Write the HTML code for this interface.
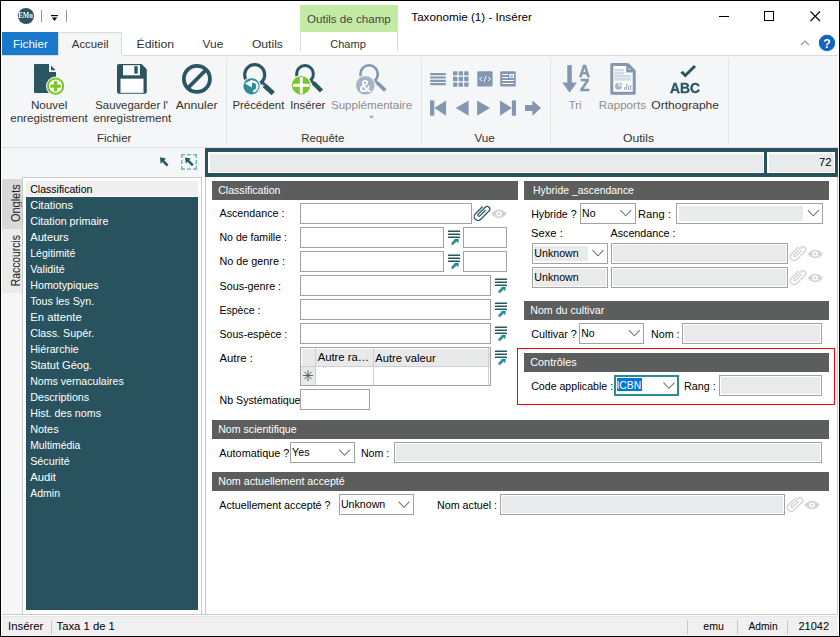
<!DOCTYPE html>
<html><head><meta charset="utf-8"><title>Taxonomie</title>
<style>
html,body{margin:0;padding:0;width:840px;height:637px;overflow:hidden;background:#fff;}
svg{display:block;font-family:"Liberation Sans",sans-serif;}
</style></head><body>
<svg width="840" height="637" viewBox="0 0 840 637">
<defs><filter id="gs" x="-20%" y="-20%" width="140%" height="140%"><feColorMatrix type="identity"/></filter></defs>
<rect x="0" y="0" width="840" height="637" fill="#ffffff" />
<rect x="300" y="5" width="98" height="27" fill="#c4eba6" />
<text x="307.0" y="22.5" font-size="11" fill="#454545" textLength="83.8" lengthAdjust="spacingAndGlyphs" >Outils de champ</text>
<text x="411.3" y="20.6" font-size="11" fill="#000" textLength="120.6" lengthAdjust="spacingAndGlyphs" >Taxonomie (1) - Insérer</text>
<circle cx="26" cy="16" r="8" fill="#2a5662"/>
<text x="18.6" y="18.3" font-size="7.6" font-weight="bold" fill="#fff" font-family="Liberation Serif" textLength="14.2" lengthAdjust="spacingAndGlyphs" filter="url(#gs)">EMu</text>
<rect x="41" y="10" width="1" height="12" fill="#9a9a9a" />
<rect x="66" y="10" width="1" height="12" fill="#9a9a9a" />
<rect x="51" y="15" width="7" height="1.2" fill="#000" />
<path d="M51.8 17.6 L57.2 17.6 L54.5 21 Z" fill="#000" />
<rect x="719" y="16" width="10" height="1" fill="#000" />
<rect x="764" y="11" width="10" height="1" fill="#000" />
<rect x="764" y="20" width="10" height="1" fill="#000" />
<rect x="764" y="11" width="1" height="10" fill="#000" />
<rect x="773" y="11" width="1" height="10" fill="#000" />
<path d="M810.5 11.5 L820 21 M820 11.5 L810.5 21" fill="none" stroke="#000" stroke-width="1.1" />
<path d="M801 45 L805 41 L809 45" fill="none" stroke="#9a9a9a" stroke-width="1.2" />
<circle cx="827" cy="43" r="8.2" fill="#1565c0"/>
<text x="827" y="47.5" font-size="12.5" font-weight="bold" fill="#fff" text-anchor="middle" filter="url(#gs)">?</text>
<rect x="2" y="32" width="56" height="23" fill="#1979ca" />
<text x="12.9" y="47.6" font-size="11" fill="#fff" textLength="34.9" lengthAdjust="spacingAndGlyphs" >Fichier</text>
<rect x="2" y="55" width="836" height="1" fill="#dadbdc" />
<rect x="58" y="32" width="64" height="24" fill="#f5f6f7" />
<rect x="58" y="32" width="1" height="23" fill="#dadbdc" />
<rect x="58" y="32" width="64" height="1" fill="#dadbdc" />
<rect x="121" y="32" width="1" height="23" fill="#dadbdc" />
<text x="71.8" y="47.7" font-size="11" fill="#333333" textLength="36.7" lengthAdjust="spacingAndGlyphs" >Accueil</text>
<text x="136.6" y="47.7" font-size="11" fill="#333333" textLength="37.5" lengthAdjust="spacingAndGlyphs" >Édition</text>
<text x="202.6" y="47.7" font-size="11" fill="#333333" textLength="20.8" lengthAdjust="spacingAndGlyphs" >Vue</text>
<text x="251.9" y="47.7" font-size="11" fill="#333333" textLength="31.0" lengthAdjust="spacingAndGlyphs" >Outils</text>
<rect x="300" y="32" width="1" height="19" fill="#d9d9d9" />
<rect x="397" y="32" width="1" height="19" fill="#d9d9d9" />
<text x="330.3" y="47.7" font-size="11" fill="#333333" textLength="35.5" lengthAdjust="spacingAndGlyphs" >Champ</text>
<rect x="2" y="56" width="836" height="91" fill="#f5f6f7" />
<rect x="59" y="55" width="62" height="1" fill="#f5f6f7" />
<rect x="2" y="147" width="836" height="1" fill="#dcdddf" />
<rect x="226" y="58" width="1" height="86" fill="#e1e3e6" />
<rect x="421" y="58" width="1" height="86" fill="#e1e3e6" />
<rect x="550" y="58" width="1" height="86" fill="#e1e3e6" />
<rect x="728" y="58" width="1" height="86" fill="#e1e3e6" />
<path d="M35 64 H49 V72 H56 V92 Q56 93 55 93 H35 Q34 93 34 92 V65 Q34 64 35 64 Z" fill="#2a5662" />
<path d="M51 65.5 L55.6 70.2 L51 70.2 Z" fill="#2a5662" />
<circle cx="55.6" cy="86.2" r="9.6" fill="#f5f6f7"/>
<circle cx="55.6" cy="86.2" r="7.6" fill="#fff" stroke="#7ac52a" stroke-width="2"/>
<rect x="50.3" y="84.6" width="10.6" height="3.2" fill="#7ac52a" rx="0.8"/>
<rect x="54" y="80.9" width="3.2" height="10.6" fill="#7ac52a" rx="0.8"/>
<text x="30.9" y="108.9" font-size="11" fill="#333333" textLength="36.4" lengthAdjust="spacingAndGlyphs" >Nouvel</text>
<text x="10.2" y="121.5" font-size="11" fill="#333333" textLength="77.5" lengthAdjust="spacingAndGlyphs" >enregistrement</text>
<path d="M119 64 H141.5 L146.8 69.3 V91.8 Q146.8 93.8 144.8 93.8 H119 Q117 93.8 117 91.8 V66 Q117 64 119 64 Z" fill="#2a5662" />
<rect x="123" y="65.2" width="17" height="10.1" fill="#fff" />
<rect x="134.3" y="66.2" width="3.4" height="7.5" fill="#2a5662" />
<rect x="120.5" y="78.7" width="23" height="14.1" fill="#fff" />
<text x="95.3" y="109" font-size="11" fill="#333333" textLength="72.7" lengthAdjust="spacingAndGlyphs" >Sauvegarder l&#x27;</text>
<text x="93.2" y="121.7" font-size="11" fill="#333333" textLength="78.1" lengthAdjust="spacingAndGlyphs" >enregistrement</text>
<circle cx="196.9" cy="78.9" r="13" fill="none" stroke="#2a5662" stroke-width="3.8"/>
<path d="M187.5 88.3 L206.3 69.5" fill="none" stroke="#2a5662" stroke-width="3.8" />
<text x="175.8" y="109" font-size="11" fill="#333333" textLength="41.7" lengthAdjust="spacingAndGlyphs" >Annuler</text>
<text x="97.0" y="141.7" font-size="11" fill="#333333" textLength="34.3" lengthAdjust="spacingAndGlyphs" >Fichier</text>
<circle cx="254.7" cy="74.7" r="10.05" fill="none" stroke="#2a5662" stroke-width="3.1"/>
<path d="M261 81 L265 85" fill="none" stroke="#2a5662" stroke-width="3" />
<path d="M264.5 85.5 L273.2 93.5" fill="none" stroke="#2a5662" stroke-width="5" />
<circle cx="251.5" cy="86.3" r="9.3" fill="#f5f6f7"/>
<circle cx="251.5" cy="86.3" r="8.1" fill="#2b8e95"/>
<path d="M244.8 83.6 L252.3 79.4 L251.8 87.6 Z" fill="#fff" />
<path d="M251.8 81.6 A4.9 4.9 0 0 1 253.2 91.3" fill="none" stroke="#fff" stroke-width="2.3" />
<text x="232.5" y="108.6" font-size="11" fill="#333333" textLength="51.8" lengthAdjust="spacingAndGlyphs" >Précédent</text>
<circle cx="305" cy="73.9" r="8.4" fill="none" stroke="#2a5662" stroke-width="3"/>
<path d="M310.5 80 L314 83.5" fill="none" stroke="#2a5662" stroke-width="3" />
<path d="M313.5 83 L321.5 91" fill="none" stroke="#2a5662" stroke-width="4.4" />
<circle cx="301.1" cy="85.3" r="10.4" fill="#f5f6f7"/>
<circle cx="301.1" cy="85.3" r="9.2" fill="#7ac52a"/>
<rect x="293" y="83.8" width="16.6" height="3" fill="#fff" />
<rect x="299.8" y="77" width="3" height="16.6" fill="#fff" />
<text x="290.2" y="108.6" font-size="11" fill="#333333" textLength="35.1" lengthAdjust="spacingAndGlyphs" >Insérer</text>
<circle cx="369.1" cy="74" r="8.7" fill="none" stroke="#8497b0" stroke-width="2.6"/>
<path d="M374.5 80 L378 83.5" fill="none" stroke="#8497b0" stroke-width="2.6" />
<path d="M377.5 83 L385.3 90.5" fill="none" stroke="#8497b0" stroke-width="3.8" />
<circle cx="365.3" cy="85.3" r="10.4" fill="#f5f6f7"/>
<circle cx="365.3" cy="85.3" r="9.3" fill="#a6b4c9"/>
<text x="365.3" y="91.6" font-size="16.5" font-weight="bold" fill="#fff" text-anchor="middle" filter="url(#gs)">&amp;</text>
<text x="330.9" y="108.6" font-size="11" fill="#8e8e8e" textLength="81.3" lengthAdjust="spacingAndGlyphs" >Supplémentaire</text>
<path d="M369 115.7 L374 115.7 L371.5 118.7 Z" fill="#a9a9a9" />
<text x="301.2" y="141.7" font-size="11" fill="#333333" textLength="43.1" lengthAdjust="spacingAndGlyphs" >Requête</text>
<rect x="430" y="73" width="16" height="2.2" fill="#8497b0" rx="1"/>
<rect x="430" y="76.4" width="16" height="2.2" fill="#8497b0" rx="1"/>
<rect x="430" y="79.8" width="16" height="2.2" fill="#8497b0" rx="1"/>
<rect x="430" y="83" width="16" height="2.2" fill="#8497b0" rx="1"/>
<rect x="453.0" y="71.2" width="4.4" height="4.4" fill="#8497b0" rx="0.8"/>
<rect x="453.0" y="76.8" width="4.4" height="4.4" fill="#8497b0" rx="0.8"/>
<rect x="453.0" y="82.4" width="4.4" height="4.4" fill="#8497b0" rx="0.8"/>
<rect x="458.6" y="71.2" width="4.4" height="4.4" fill="#8497b0" rx="0.8"/>
<rect x="458.6" y="76.8" width="4.4" height="4.4" fill="#8497b0" rx="0.8"/>
<rect x="458.6" y="82.4" width="4.4" height="4.4" fill="#8497b0" rx="0.8"/>
<rect x="464.2" y="71.2" width="4.4" height="4.4" fill="#8497b0" rx="0.8"/>
<rect x="464.2" y="76.8" width="4.4" height="4.4" fill="#8497b0" rx="0.8"/>
<rect x="464.2" y="82.4" width="4.4" height="4.4" fill="#8497b0" rx="0.8"/>
<rect x="477.3" y="71.2" width="15.3" height="15.3" fill="#8497b0" rx="1"/>
<path d="M482 77 L479.5 79 L482 81 M488 77 L490.5 79 L488 81 M486 76 L484 82" fill="none" stroke="#eef1f6" stroke-width="1" />
<rect x="500.2" y="71.2" width="15.5" height="15.3" fill="#8497b0" rx="1"/>
<rect x="502.2" y="74" width="6" height="1" fill="#fff" />
<rect x="502.2" y="77" width="6" height="1" fill="#fff" />
<rect x="509.4" y="74" width="4.6" height="4" fill="#fff" />
<rect x="510.4" y="75.6" width="2.6" height="1.6" fill="#8497b0" />
<rect x="502.2" y="80" width="11.5" height="1" fill="#fff" />
<rect x="502.2" y="83" width="11.5" height="1" fill="#fff" />
<rect x="430" y="100.4" width="4.3" height="15.3" fill="#8497b0" />
<path d="M446.1 100.4 L446.1 115.7 L434.3 108 Z" fill="#8497b0" />
<path d="M468.6 100.4 L468.6 115.7 L455.7 108 Z" fill="#8497b0" />
<path d="M477.1 100.4 L477.1 115.7 L490 108 Z" fill="#8497b0" />
<path d="M500 100.4 L500 115.7 L511.9 108 Z" fill="#8497b0" />
<rect x="511.9" y="100.4" width="4.1" height="15.3" fill="#8497b0" />
<rect x="525" y="105" width="8" height="6" fill="#8497b0" />
<path d="M532.4 100.4 L541 108 L532.4 115.7 Z" fill="#8497b0" />
<text x="474.5" y="141.7" font-size="11" fill="#333333" textLength="20.3" lengthAdjust="spacingAndGlyphs" >Vue</text>
<rect x="567.3" y="65.1" width="4.5" height="18" fill="#8497b0" />
<path d="M562.3 82.6 L576.9 82.6 L569.6 92.8 Z" fill="#8497b0" />
<text x="584.5" y="76.7" font-size="16" font-weight="bold" fill="#8497b0" text-anchor="middle" textLength="11" lengthAdjust="spacingAndGlyphs" stroke="#8497b0" stroke-width="0.5" filter="url(#gs)">A</text>
<text x="584.8" y="91" font-size="16" font-weight="bold" fill="#8497b0" text-anchor="middle" textLength="9.5" lengthAdjust="spacingAndGlyphs" stroke="#8497b0" stroke-width="0.5" filter="url(#gs)">Z</text>
<text x="568.7" y="108.8" font-size="11" fill="#8e8e8e" textLength="12.8" lengthAdjust="spacingAndGlyphs" >Tri</text>
<path d="M611.8 64.4 H627.5 L634.2 71.1 V93.2 H611.8 Z" fill="#ffffff" stroke="#8497b0" stroke-width="3" stroke-linejoin="round"/>
<path d="M627.5 64.4 V71.1 H634.2" fill="none" stroke="#8497b0" stroke-width="2.6" />
<rect x="614.3" y="68.8" width="10" height="2.6" fill="#d3dbe6" />
<rect x="614.3" y="71.9" width="10" height="2.6" fill="#d3dbe6" />
<rect x="614.3" y="75" width="17" height="2.6" fill="#d3dbe6" />
<rect x="614.3" y="78.1" width="17" height="2.6" fill="#d3dbe6" />
<path d="M618.5 82.8 A3.5 3.5 0 1 0 622 86.3 L618.5 86.3 Z" fill="#a9b6c9" />
<path d="M619.3 82 A3.5 3.5 0 0 1 622.8 85.5 L619.3 85.5 Z" fill="#c5cfdc" />
<rect x="624" y="87" width="1.3" height="3" fill="#a9b6c9" />
<rect x="626" y="84" width="1.3" height="6" fill="#a9b6c9" />
<rect x="628" y="86" width="1.3" height="4" fill="#a9b6c9" />
<rect x="630" y="85" width="1.3" height="5" fill="#a9b6c9" />
<text x="598.8" y="108.8" font-size="11" fill="#8e8e8e" textLength="47.2" lengthAdjust="spacingAndGlyphs" >Rapports</text>
<path d="M681.5 71.8 L685.3 75.5 L695 66" fill="none" stroke="#2a5662" stroke-width="3" />
<text x="670" y="92.5" font-size="14.5" font-weight="bold" fill="#2a5662" textLength="30" lengthAdjust="spacingAndGlyphs" stroke="#2a5662" stroke-width="0.35" filter="url(#gs)">ABC</text>
<text x="651.3" y="108.8" font-size="11" fill="#333333" textLength="67.7" lengthAdjust="spacingAndGlyphs" >Orthographe</text>
<text x="623.0" y="141.7" font-size="11" fill="#333333" textLength="31.1" lengthAdjust="spacingAndGlyphs" >Outils</text>
<rect x="2" y="148" width="203" height="466" fill="#f5f6f7" />
<path d="M160 157.2 L166 158.4 L164.2 160.2 L168.5 164.5 L166.6 166.4 L162.3 162.1 L160.6 163.8 Z" fill="#2a5662" />
<rect x="181" y="154" width="4" height="1.5" fill="#6fbcc0" />
<rect x="187" y="154" width="4" height="1.5" fill="#6fbcc0" />
<rect x="193" y="154" width="4" height="1.5" fill="#6fbcc0" />
<rect x="181" y="168.3" width="4" height="1.5" fill="#6fbcc0" />
<rect x="187" y="168.3" width="4" height="1.5" fill="#6fbcc0" />
<rect x="193" y="168.3" width="4" height="1.5" fill="#6fbcc0" />
<rect x="181" y="154" width="1.5" height="4" fill="#6fbcc0" />
<rect x="181" y="160" width="1.5" height="4" fill="#6fbcc0" />
<rect x="181" y="166" width="1.5" height="4" fill="#6fbcc0" />
<rect x="195.5" y="154" width="1.5" height="4" fill="#6fbcc0" />
<rect x="195.5" y="160" width="1.5" height="4" fill="#6fbcc0" />
<rect x="195.5" y="166" width="1.5" height="4" fill="#6fbcc0" />
<path d="M185 157.5 L190.9 158.4 L189.2 160.1 L193.7 164.6 L192 166.3 L187.5 161.8 L185.8 163.5 Z" fill="#2a5662" />
<rect x="2" y="179" width="20" height="50" fill="#d9d9d9" />
<rect x="2" y="229" width="20" height="64" fill="#ebebeb" />
<text transform="translate(19.5,222) rotate(-90)" font-size="12" fill="#222" textLength="37.7" lengthAdjust="spacingAndGlyphs">Onglets</text>
<text transform="translate(19.5,286.3) rotate(-90)" font-size="12" fill="#222" textLength="51.3" lengthAdjust="spacingAndGlyphs">Raccourcis</text>
<rect x="22" y="177" width="180" height="438" fill="#ffffff" />
<rect x="22" y="177" width="180" height="1" fill="#c9c9c9" />
<rect x="22" y="614" width="180" height="1" fill="#c9c9c9" />
<rect x="22" y="177" width="1" height="438" fill="#c9c9c9" />
<rect x="201" y="177" width="1" height="438" fill="#c9c9c9" />
<rect x="26" y="181" width="172" height="15" fill="#efefef" />
<rect x="26" y="197" width="172" height="413" fill="#28535e" />
<text x="30.2" y="193" font-size="11" fill="#000" textLength="62.2" lengthAdjust="spacingAndGlyphs" >Classification</text>
<text x="30.2" y="209" font-size="11" fill="#ffffff" textLength="42.8" lengthAdjust="spacingAndGlyphs" >Citations</text>
<text x="30.2" y="225" font-size="11" fill="#ffffff" textLength="78.2" lengthAdjust="spacingAndGlyphs" >Citation primaire</text>
<text x="30.2" y="241" font-size="11" fill="#ffffff" textLength="38.5" lengthAdjust="spacingAndGlyphs" >Auteurs</text>
<text x="30.2" y="257" font-size="11" fill="#ffffff" textLength="45.2" lengthAdjust="spacingAndGlyphs" >Légitimité</text>
<text x="30.2" y="273" font-size="11" fill="#ffffff" textLength="34.5" lengthAdjust="spacingAndGlyphs" >Validité</text>
<text x="30.2" y="289" font-size="11" fill="#ffffff" textLength="68.5" lengthAdjust="spacingAndGlyphs" >Homotypiques</text>
<text x="30.2" y="305" font-size="11" fill="#ffffff" textLength="64.0" lengthAdjust="spacingAndGlyphs" >Tous les Syn.</text>
<text x="30.2" y="321" font-size="11" fill="#ffffff" textLength="51.5" lengthAdjust="spacingAndGlyphs" >En attente</text>
<text x="30.2" y="337" font-size="11" fill="#ffffff" textLength="64.0" lengthAdjust="spacingAndGlyphs" >Class. Supér.</text>
<text x="30.2" y="353" font-size="11" fill="#ffffff" textLength="48.5" lengthAdjust="spacingAndGlyphs" >Hiérarchie</text>
<text x="30.2" y="369" font-size="11" fill="#ffffff" textLength="62.0" lengthAdjust="spacingAndGlyphs" >Statut Géog.</text>
<text x="30.2" y="385" font-size="11" fill="#ffffff" textLength="93.5" lengthAdjust="spacingAndGlyphs" >Noms vernaculaires</text>
<text x="30.2" y="401" font-size="11" fill="#ffffff" textLength="59.0" lengthAdjust="spacingAndGlyphs" >Descriptions</text>
<text x="30.2" y="417" font-size="11" fill="#ffffff" textLength="70.8" lengthAdjust="spacingAndGlyphs" >Hist. des noms</text>
<text x="30.2" y="433" font-size="11" fill="#ffffff" textLength="28.4" lengthAdjust="spacingAndGlyphs" >Notes</text>
<text x="30.2" y="449" font-size="11" fill="#ffffff" textLength="50.2" lengthAdjust="spacingAndGlyphs" >Multimédia</text>
<text x="30.2" y="465" font-size="11" fill="#ffffff" textLength="39.5" lengthAdjust="spacingAndGlyphs" >Sécurité</text>
<text x="30.2" y="481" font-size="11" fill="#ffffff" textLength="25.8" lengthAdjust="spacingAndGlyphs" >Audit</text>
<text x="30.2" y="497" font-size="11" fill="#ffffff" textLength="29.8" lengthAdjust="spacingAndGlyphs" >Admin</text>
<rect x="205" y="148" width="633" height="29" fill="#28535e" />
<rect x="208" y="152" width="556" height="21" fill="#ffffff" />
<rect x="210" y="154" width="553" height="18" fill="#e9eaeb" />
<rect x="767" y="152" width="68" height="21" fill="#ffffff" />
<rect x="769" y="154" width="65" height="18" fill="#e9eaeb" />
<rect x="202" y="177" width="3" height="437" fill="#ffffff" />
<text x="819.0" y="165.6" font-size="11" fill="#000" textLength="12.5" lengthAdjust="spacingAndGlyphs" >72</text>
<rect x="205" y="177" width="1" height="438" fill="#c9c9c9" />
<rect x="837" y="177" width="1" height="438" fill="#c9c9c9" />
<rect x="2" y="614" width="836" height="1" fill="#c9c9c9" />
<rect x="212" y="181" width="306" height="19" fill="#5c5e5d" />
<text x="218.2" y="193.6" font-size="11" fill="#fff" textLength="62.3" lengthAdjust="spacingAndGlyphs" >Classification</text>
<rect x="524" y="181" width="305" height="19" fill="#5c5e5d" />
<text x="533.1" y="193.6" font-size="11" fill="#fff" textLength="100.8" lengthAdjust="spacingAndGlyphs" >Hybride _ascendance</text>
<rect x="524" y="301" width="305" height="19" fill="#5c5e5d" />
<text x="530.2" y="313.6" font-size="11" fill="#fff" textLength="74.1" lengthAdjust="spacingAndGlyphs" >Nom du cultivar</text>
<rect x="524" y="353" width="305" height="19" fill="#5c5e5d" />
<text x="530.2" y="365.6" font-size="11" fill="#fff" textLength="46.6" lengthAdjust="spacingAndGlyphs" >Contrôles</text>
<rect x="212" y="420" width="617" height="19" fill="#5c5e5d" />
<text x="218.2" y="432.6" font-size="11" fill="#fff" textLength="78.5" lengthAdjust="spacingAndGlyphs" >Nom scientifique</text>
<rect x="212" y="472" width="617" height="19" fill="#5c5e5d" />
<text x="218.2" y="484.6" font-size="11" fill="#fff" textLength="126.6" lengthAdjust="spacingAndGlyphs" >Nom actuellement accepté</text>
<rect x="517" y="348" width="318" height="1" fill="#ff0000" />
<rect x="517" y="404" width="318" height="1" fill="#ff0000" />
<rect x="517" y="348" width="1" height="57" fill="#ff0000" />
<rect x="834" y="348" width="1" height="57" fill="#ff0000" />
<text x="219.5" y="216.7" font-size="11" fill="#000" textLength="64.9" lengthAdjust="spacingAndGlyphs" >Ascendance :</text>
<rect x="300" y="203" width="172" height="21" fill="#fff" />
<rect x="300" y="203" width="172" height="1" fill="#a2a2a2" />
<rect x="300" y="223" width="172" height="1" fill="#a2a2a2" />
<rect x="300" y="203" width="1" height="21" fill="#a2a2a2" />
<rect x="471" y="203" width="1" height="21" fill="#a2a2a2" />
<path transform="translate(482,213.8) rotate(-45)" d="M5.7 -4.7 L-4.65 -4.7 A3.85 3.85 0 0 0 -4.65 3.0 L6.9 3.0 A2.7 2.7 0 0 0 6.9 -2.4 L-3.0 -2.4 A1.2 1.2 0 0 0 -3.0 0 L5.3 0" fill="none" stroke="#2a5662" stroke-width="1.25"/>
<path d="M491.2 213.8 Q499 205.3 506.8 213.8 Q499 222.3 491.2 213.8 Z" fill="#d2d2d2" />
<circle cx="499" cy="213.8" r="2.8" fill="#fff"/>
<circle cx="499" cy="213.8" r="1.3" fill="#d2d2d2"/>
<text x="219.5" y="240.7" font-size="11" fill="#000" textLength="67.4" lengthAdjust="spacingAndGlyphs" >No de famille :</text>
<rect x="300" y="227" width="144" height="21" fill="#fff" />
<rect x="300" y="227" width="144" height="1" fill="#a2a2a2" />
<rect x="300" y="247" width="144" height="1" fill="#a2a2a2" />
<rect x="300" y="227" width="1" height="21" fill="#a2a2a2" />
<rect x="443" y="227" width="1" height="21" fill="#a2a2a2" />
<rect x="448" y="230.5" width="12" height="1.5" fill="#2a5662" />
<rect x="448" y="233.5" width="12" height="1.5" fill="#2a5662" />
<rect x="448" y="236.5" width="12" height="1.5" fill="#2a5662" />
<path d="M452.6 243.5 L456 240.3" fill="none" stroke="#2b8e95" stroke-width="2.7" stroke-linecap="round"/>
<path d="M454 239.1 L458.8 238.8 L458.4 243.3 Z" fill="#2b8e95" />
<rect x="463" y="227" width="44" height="21" fill="#fff" />
<rect x="463" y="227" width="44" height="1" fill="#a2a2a2" />
<rect x="463" y="247" width="44" height="1" fill="#a2a2a2" />
<rect x="463" y="227" width="1" height="21" fill="#a2a2a2" />
<rect x="506" y="227" width="1" height="21" fill="#a2a2a2" />
<text x="219.5" y="264.7" font-size="11" fill="#000" textLength="65.4" lengthAdjust="spacingAndGlyphs" >No de genre :</text>
<rect x="300" y="251" width="144" height="21" fill="#fff" />
<rect x="300" y="251" width="144" height="1" fill="#a2a2a2" />
<rect x="300" y="271" width="144" height="1" fill="#a2a2a2" />
<rect x="300" y="251" width="1" height="21" fill="#a2a2a2" />
<rect x="443" y="251" width="1" height="21" fill="#a2a2a2" />
<rect x="448" y="254.5" width="12" height="1.5" fill="#2a5662" />
<rect x="448" y="257.5" width="12" height="1.5" fill="#2a5662" />
<rect x="448" y="260.5" width="12" height="1.5" fill="#2a5662" />
<path d="M452.6 267.5 L456 264.3" fill="none" stroke="#2b8e95" stroke-width="2.7" stroke-linecap="round"/>
<path d="M454 263.1 L458.8 262.8 L458.4 267.3 Z" fill="#2b8e95" />
<rect x="463" y="251" width="44" height="21" fill="#fff" />
<rect x="463" y="251" width="44" height="1" fill="#a2a2a2" />
<rect x="463" y="271" width="44" height="1" fill="#a2a2a2" />
<rect x="463" y="251" width="1" height="21" fill="#a2a2a2" />
<rect x="506" y="251" width="1" height="21" fill="#a2a2a2" />
<text x="219.5" y="289.5" font-size="11" fill="#000" textLength="61.6" lengthAdjust="spacingAndGlyphs" >Sous-genre :</text>
<rect x="300" y="275" width="191" height="21" fill="#fff" />
<rect x="300" y="275" width="191" height="1" fill="#a2a2a2" />
<rect x="300" y="295" width="191" height="1" fill="#a2a2a2" />
<rect x="300" y="275" width="1" height="21" fill="#a2a2a2" />
<rect x="490" y="275" width="1" height="21" fill="#a2a2a2" />
<rect x="495" y="278.5" width="12" height="1.5" fill="#2a5662" />
<rect x="495" y="281.5" width="12" height="1.5" fill="#2a5662" />
<rect x="495" y="284.5" width="12" height="1.5" fill="#2a5662" />
<path d="M499.6 291.5 L503 288.3" fill="none" stroke="#2b8e95" stroke-width="2.7" stroke-linecap="round"/>
<path d="M501 287.1 L505.8 286.8 L505.4 291.3 Z" fill="#2b8e95" />
<text x="219.5" y="313.5" font-size="11" fill="#000" textLength="40.9" lengthAdjust="spacingAndGlyphs" >Espèce :</text>
<rect x="300" y="299" width="191" height="21" fill="#fff" />
<rect x="300" y="299" width="191" height="1" fill="#a2a2a2" />
<rect x="300" y="319" width="191" height="1" fill="#a2a2a2" />
<rect x="300" y="299" width="1" height="21" fill="#a2a2a2" />
<rect x="490" y="299" width="1" height="21" fill="#a2a2a2" />
<rect x="495" y="302.5" width="12" height="1.5" fill="#2a5662" />
<rect x="495" y="305.5" width="12" height="1.5" fill="#2a5662" />
<rect x="495" y="308.5" width="12" height="1.5" fill="#2a5662" />
<path d="M499.6 315.5 L503 312.3" fill="none" stroke="#2b8e95" stroke-width="2.7" stroke-linecap="round"/>
<path d="M501 311.1 L505.8 310.8 L505.4 315.3 Z" fill="#2b8e95" />
<text x="219.5" y="337.5" font-size="11" fill="#000" textLength="67.8" lengthAdjust="spacingAndGlyphs" >Sous-espèce :</text>
<rect x="300" y="323" width="191" height="21" fill="#fff" />
<rect x="300" y="323" width="191" height="1" fill="#a2a2a2" />
<rect x="300" y="343" width="191" height="1" fill="#a2a2a2" />
<rect x="300" y="323" width="1" height="21" fill="#a2a2a2" />
<rect x="490" y="323" width="1" height="21" fill="#a2a2a2" />
<rect x="495" y="326.5" width="12" height="1.5" fill="#2a5662" />
<rect x="495" y="329.5" width="12" height="1.5" fill="#2a5662" />
<rect x="495" y="332.5" width="12" height="1.5" fill="#2a5662" />
<path d="M499.6 339.5 L503 336.3" fill="none" stroke="#2b8e95" stroke-width="2.7" stroke-linecap="round"/>
<path d="M501 335.1 L505.8 334.8 L505.4 339.3 Z" fill="#2b8e95" />
<text x="219.5" y="362" font-size="11" fill="#000" textLength="33.4" lengthAdjust="spacingAndGlyphs" >Autre :</text>
<rect x="300" y="347" width="191" height="39" fill="#fff" />
<rect x="300" y="347" width="191" height="1" fill="#a2a2a2" />
<rect x="300" y="385" width="191" height="1" fill="#a2a2a2" />
<rect x="300" y="347" width="1" height="39" fill="#a2a2a2" />
<rect x="490" y="347" width="1" height="39" fill="#a2a2a2" />
<rect x="301" y="348" width="189" height="18" fill="#e8e9ea" />
<rect x="301" y="348" width="189" height="1" fill="#fff" />
<rect x="301" y="348" width="1" height="37" fill="#fff" />
<rect x="301" y="366" width="189" height="1" fill="#d0d0d0" />
<rect x="315" y="348" width="1" height="37" fill="#d0d0d0" />
<rect x="373" y="348" width="1" height="37" fill="#d0d0d0" />
<rect x="488" y="348" width="1" height="37" fill="#d0d0d0" />
<rect x="301" y="367" width="14" height="18" fill="#e8e9ea" />
<path d="M308 370 V381 M302.8 375.5 H313.2 M304.3 371.8 L311.7 379.2 M311.7 371.8 L304.3 379.2" fill="none" stroke="#555" stroke-width="0.9" />
<text x="317.7" y="361.2" font-size="11" fill="#000" textLength="51.4" lengthAdjust="spacingAndGlyphs" >Autre ra…</text>
<text x="375.2" y="361.8" font-size="11" fill="#000" textLength="60.5" lengthAdjust="spacingAndGlyphs" >Autre valeur</text>
<rect x="495" y="350.5" width="12" height="1.5" fill="#2a5662" />
<rect x="495" y="353.5" width="12" height="1.5" fill="#2a5662" />
<rect x="495" y="356.5" width="12" height="1.5" fill="#2a5662" />
<path d="M499.6 363.5 L503 360.3" fill="none" stroke="#2b8e95" stroke-width="2.7" stroke-linecap="round"/>
<path d="M501 359.1 L505.8 358.8 L505.4 363.3 Z" fill="#2b8e95" />
<text x="219.5" y="403.5" font-size="11" fill="#000" textLength="81.0" lengthAdjust="spacingAndGlyphs" >Nb Systématique</text>
<rect x="300" y="389" width="70" height="21" fill="#fff" />
<rect x="300" y="389" width="70" height="1" fill="#a2a2a2" />
<rect x="300" y="409" width="70" height="1" fill="#a2a2a2" />
<rect x="300" y="389" width="1" height="21" fill="#a2a2a2" />
<rect x="369" y="389" width="1" height="21" fill="#a2a2a2" />
<text x="531.2" y="217.6" font-size="11" fill="#000" textLength="45.4" lengthAdjust="spacingAndGlyphs" >Hybride ?</text>
<rect x="580" y="203" width="56" height="21" fill="#fff" />
<rect x="580" y="203" width="56" height="1" fill="#a2a2a2" />
<rect x="580" y="223" width="56" height="1" fill="#a2a2a2" />
<rect x="580" y="203" width="1" height="21" fill="#a2a2a2" />
<rect x="635" y="203" width="1" height="21" fill="#a2a2a2" />
<text x="582.1" y="217" font-size="11" fill="#000" textLength="13.4" lengthAdjust="spacingAndGlyphs" >No</text>
<path d="M620.3 210.2 L625.8 215.8 L631.3 210.2" fill="none" stroke="#707070" stroke-width="1.05" />
<text x="638.0" y="217.6" font-size="11" fill="#000" textLength="32.8" lengthAdjust="spacingAndGlyphs" >Rang :</text>
<rect x="676" y="203" width="147" height="21" fill="#fff" />
<rect x="676" y="203" width="147" height="1" fill="#a2a2a2" />
<rect x="676" y="223" width="147" height="1" fill="#a2a2a2" />
<rect x="676" y="203" width="1" height="21" fill="#a2a2a2" />
<rect x="822" y="203" width="1" height="21" fill="#a2a2a2" />
<rect x="679" y="206" width="124" height="15" fill="#e9eaeb" />
<path d="M807.8 210.2 L813.3 215.8 L818.8 210.2" fill="none" stroke="#707070" stroke-width="1.05" />
<text x="531.1" y="236.6" font-size="11" fill="#000" textLength="31.7" lengthAdjust="spacingAndGlyphs" >Sexe :</text>
<text x="610.5" y="236.6" font-size="11" fill="#000" textLength="65.0" lengthAdjust="spacingAndGlyphs" >Ascendance :</text>
<rect x="532" y="243" width="76" height="21" fill="#fff" />
<rect x="532" y="243" width="76" height="1" fill="#a2a2a2" />
<rect x="532" y="263" width="76" height="1" fill="#a2a2a2" />
<rect x="532" y="243" width="1" height="21" fill="#a2a2a2" />
<rect x="607" y="243" width="1" height="21" fill="#a2a2a2" />
<rect x="534" y="246" width="54" height="15" fill="#e9eaeb" />
<text x="534.3" y="256.7" font-size="11" fill="#000" textLength="44.4" lengthAdjust="spacingAndGlyphs" >Unknown</text>
<path d="M592.5 250.2 L598 255.8 L603.5 250.2" fill="none" stroke="#707070" stroke-width="1.05" />
<rect x="611" y="243" width="177" height="21" fill="#fff" />
<rect x="611" y="243" width="177" height="1" fill="#a2a2a2" />
<rect x="611" y="263" width="177" height="1" fill="#a2a2a2" />
<rect x="611" y="243" width="1" height="21" fill="#a2a2a2" />
<rect x="787" y="243" width="1" height="21" fill="#a2a2a2" />
<rect x="613" y="245" width="173" height="17" fill="#e9eaeb" />
<path transform="translate(798,254) rotate(-45)" d="M5.7 -4.7 L-4.65 -4.7 A3.85 3.85 0 0 0 -4.65 3.0 L6.9 3.0 A2.7 2.7 0 0 0 6.9 -2.4 L-3.0 -2.4 A1.2 1.2 0 0 0 -3.0 0 L5.3 0" fill="none" stroke="#d0d0d0" stroke-width="1.25"/>
<path d="M807.4000000000001 254 Q815.2 245.5 823.0 254 Q815.2 262.5 807.4000000000001 254 Z" fill="#d2d2d2" />
<circle cx="815.2" cy="254" r="2.8" fill="#fff"/>
<circle cx="815.2" cy="254" r="1.3" fill="#d2d2d2"/>
<rect x="532" y="267" width="76" height="21" fill="#fff" />
<rect x="532" y="267" width="76" height="1" fill="#a2a2a2" />
<rect x="532" y="287" width="76" height="1" fill="#a2a2a2" />
<rect x="532" y="267" width="1" height="21" fill="#a2a2a2" />
<rect x="607" y="267" width="1" height="21" fill="#a2a2a2" />
<rect x="534" y="269" width="72" height="17" fill="#e9eaeb" />
<text x="534.3" y="280.7" font-size="11" fill="#000" textLength="44.4" lengthAdjust="spacingAndGlyphs" >Unknown</text>
<rect x="611" y="267" width="177" height="21" fill="#fff" />
<rect x="611" y="267" width="177" height="1" fill="#a2a2a2" />
<rect x="611" y="287" width="177" height="1" fill="#a2a2a2" />
<rect x="611" y="267" width="1" height="21" fill="#a2a2a2" />
<rect x="787" y="267" width="1" height="21" fill="#a2a2a2" />
<rect x="613" y="269" width="173" height="17" fill="#e9eaeb" />
<path transform="translate(798,278) rotate(-45)" d="M5.7 -4.7 L-4.65 -4.7 A3.85 3.85 0 0 0 -4.65 3.0 L6.9 3.0 A2.7 2.7 0 0 0 6.9 -2.4 L-3.0 -2.4 A1.2 1.2 0 0 0 -3.0 0 L5.3 0" fill="none" stroke="#d0d0d0" stroke-width="1.25"/>
<path d="M807.4000000000001 278 Q815.2 269.5 823.0 278 Q815.2 286.5 807.4000000000001 278 Z" fill="#d2d2d2" />
<circle cx="815.2" cy="278" r="2.8" fill="#fff"/>
<circle cx="815.2" cy="278" r="1.3" fill="#d2d2d2"/>
<text x="531.2" y="337.8" font-size="11" fill="#000" textLength="45.6" lengthAdjust="spacingAndGlyphs" >Cultivar ?</text>
<rect x="579" y="323" width="65" height="21" fill="#fff" />
<rect x="579" y="323" width="65" height="1" fill="#a2a2a2" />
<rect x="579" y="343" width="65" height="1" fill="#a2a2a2" />
<rect x="579" y="323" width="1" height="21" fill="#a2a2a2" />
<rect x="643" y="323" width="1" height="21" fill="#a2a2a2" />
<text x="581.3" y="337" font-size="11" fill="#000" textLength="13.4" lengthAdjust="spacingAndGlyphs" >No</text>
<path d="M628.9 330.2 L634.4 335.8 L639.9 330.2" fill="none" stroke="#707070" stroke-width="1.05" />
<text x="651.0" y="337.8" font-size="11" fill="#000" textLength="28.5" lengthAdjust="spacingAndGlyphs" >Nom :</text>
<rect x="682" y="323" width="140" height="21" fill="#fff" />
<rect x="682" y="323" width="140" height="1" fill="#a2a2a2" />
<rect x="682" y="343" width="140" height="1" fill="#a2a2a2" />
<rect x="682" y="323" width="1" height="21" fill="#a2a2a2" />
<rect x="821" y="323" width="1" height="21" fill="#a2a2a2" />
<rect x="684" y="325" width="136" height="17" fill="#e9eaeb" />
<text x="531.2" y="389.7" font-size="11" fill="#000" textLength="81.9" lengthAdjust="spacingAndGlyphs" >Code applicable :</text>
<rect x="614" y="375" width="65" height="21" fill="#fff" />
<rect x="614" y="375" width="65" height="1" fill="#2a8c8f" />
<rect x="614" y="395" width="65" height="1" fill="#2a8c8f" />
<rect x="614" y="375" width="1" height="21" fill="#2a8c8f" />
<rect x="678" y="375" width="1" height="21" fill="#2a8c8f" />
<rect x="615" y="376" width="63" height="1" fill="#2a8c8f" />
<rect x="615" y="394" width="63" height="1" fill="#2a8c8f" />
<rect x="615" y="376" width="1" height="19" fill="#2a8c8f" />
<rect x="677" y="376" width="1" height="19" fill="#2a8c8f" />
<rect x="617" y="378" width="25" height="13" fill="#0078d7" />
<text x="616.5" y="389" font-size="11" fill="#fff" textLength="24.7" lengthAdjust="spacingAndGlyphs" >ICBN</text>
<path d="M663.5 382.7 L669 388.3 L674.5 382.7" fill="none" stroke="#707070" stroke-width="1.05" />
<text x="684.1" y="389.7" font-size="11" fill="#000" textLength="31.7" lengthAdjust="spacingAndGlyphs" >Rang :</text>
<rect x="719" y="375" width="103" height="21" fill="#fff" />
<rect x="719" y="375" width="103" height="1" fill="#a2a2a2" />
<rect x="719" y="395" width="103" height="1" fill="#a2a2a2" />
<rect x="719" y="375" width="1" height="21" fill="#a2a2a2" />
<rect x="821" y="375" width="1" height="21" fill="#a2a2a2" />
<rect x="721" y="377" width="99" height="17" fill="#e9eaeb" />
<text x="219.3" y="457" font-size="11" fill="#000" textLength="70.0" lengthAdjust="spacingAndGlyphs" >Automatique ?</text>
<rect x="290" y="442" width="65" height="21" fill="#fff" />
<rect x="290" y="442" width="65" height="1" fill="#a2a2a2" />
<rect x="290" y="462" width="65" height="1" fill="#a2a2a2" />
<rect x="290" y="442" width="1" height="21" fill="#a2a2a2" />
<rect x="354" y="442" width="1" height="21" fill="#a2a2a2" />
<text x="292.1" y="455.5" font-size="11" fill="#000" textLength="17.4" lengthAdjust="spacingAndGlyphs" >Yes</text>
<path d="M339.0 449.7 L344.5 455.3 L350.0 449.7" fill="none" stroke="#707070" stroke-width="1.05" />
<text x="360.9" y="457" font-size="11" fill="#000" textLength="28.4" lengthAdjust="spacingAndGlyphs" >Nom :</text>
<rect x="394" y="442" width="428" height="21" fill="#fff" />
<rect x="394" y="442" width="428" height="1" fill="#a2a2a2" />
<rect x="394" y="462" width="428" height="1" fill="#a2a2a2" />
<rect x="394" y="442" width="1" height="21" fill="#a2a2a2" />
<rect x="821" y="442" width="1" height="21" fill="#a2a2a2" />
<rect x="396" y="444" width="424" height="17" fill="#e9eaeb" />
<text x="219.3" y="509" font-size="11" fill="#000" textLength="111.2" lengthAdjust="spacingAndGlyphs" >Actuellement accepté ?</text>
<rect x="339" y="494" width="75" height="21" fill="#fff" />
<rect x="339" y="494" width="75" height="1" fill="#a2a2a2" />
<rect x="339" y="514" width="75" height="1" fill="#a2a2a2" />
<rect x="339" y="494" width="1" height="21" fill="#a2a2a2" />
<rect x="413" y="494" width="1" height="21" fill="#a2a2a2" />
<text x="340.9" y="507.5" font-size="11" fill="#000" textLength="44.4" lengthAdjust="spacingAndGlyphs" >Unknown</text>
<path d="M398.5 501.7 L404 507.3 L409.5 501.7" fill="none" stroke="#707070" stroke-width="1.05" />
<text x="437.0" y="509" font-size="11" fill="#000" textLength="60.1" lengthAdjust="spacingAndGlyphs" >Nom actuel :</text>
<rect x="500" y="494" width="285" height="21" fill="#fff" />
<rect x="500" y="494" width="285" height="1" fill="#a2a2a2" />
<rect x="500" y="514" width="285" height="1" fill="#a2a2a2" />
<rect x="500" y="494" width="1" height="21" fill="#a2a2a2" />
<rect x="784" y="494" width="1" height="21" fill="#a2a2a2" />
<rect x="502" y="496" width="281" height="17" fill="#e9eaeb" />
<path transform="translate(795,505) rotate(-45)" d="M5.7 -4.7 L-4.65 -4.7 A3.85 3.85 0 0 0 -4.65 3.0 L6.9 3.0 A2.7 2.7 0 0 0 6.9 -2.4 L-3.0 -2.4 A1.2 1.2 0 0 0 -3.0 0 L5.3 0" fill="none" stroke="#d0d0d0" stroke-width="1.25"/>
<path d="M804.2 505 Q812 496.5 819.8 505 Q812 513.5 804.2 505 Z" fill="#d2d2d2" />
<circle cx="812" cy="505" r="2.8" fill="#fff"/>
<circle cx="812" cy="505" r="1.3" fill="#d2d2d2"/>
<rect x="2" y="615" width="836" height="1" fill="#ffffff" />
<rect x="2" y="616" width="836" height="20" fill="#f0f0f0" />
<rect x="2" y="616" width="836" height="1" fill="#e6e6e6" />
<text x="8.1" y="629.5" font-size="11" fill="#000" textLength="35.3" lengthAdjust="spacingAndGlyphs" >Insérer</text>
<rect x="51" y="620" width="1" height="14" fill="#c8c8c8" />
<text x="56.6" y="629.5" font-size="11" fill="#000" textLength="58.2" lengthAdjust="spacingAndGlyphs" >Taxa 1 de 1</text>
<rect x="687" y="620" width="1" height="14" fill="#c8c8c8" />
<rect x="737" y="620" width="1" height="14" fill="#c8c8c8" />
<rect x="787" y="620" width="1" height="14" fill="#c8c8c8" />
<text x="703.3" y="629.5" font-size="11" fill="#000" textLength="20.6" lengthAdjust="spacingAndGlyphs" >emu</text>
<text x="748.5" y="629.5" font-size="11" fill="#000" textLength="29.1" lengthAdjust="spacingAndGlyphs" >Admin</text>
<text x="798.5" y="629.5" font-size="11" fill="#000" textLength="30.6" lengthAdjust="spacingAndGlyphs" >21042</text>
<rect x="0" y="0" width="840" height="1" fill="#000" />
<rect x="0" y="636" width="840" height="1" fill="#000" />
<rect x="0" y="0" width="1" height="637" fill="#000" />
<rect x="839" y="0" width="1" height="637" fill="#000" />
</svg>
</body></html>
